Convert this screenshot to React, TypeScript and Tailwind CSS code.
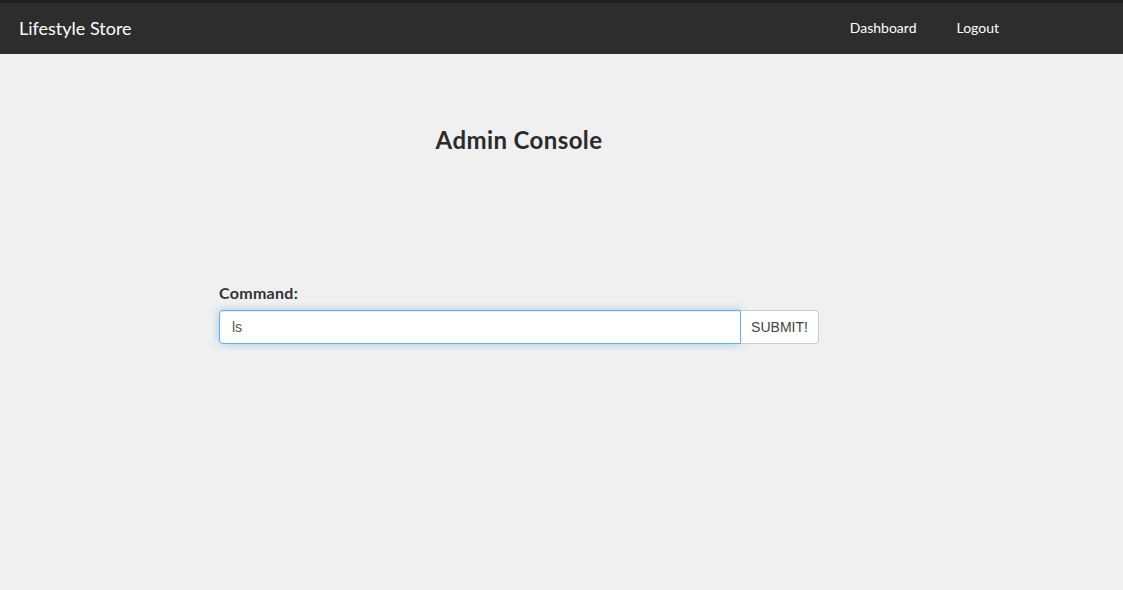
export default function App() {
  return (
    <div className="min-h-[590px] bg-[#f0f0f0] font-['Lato',sans-serif]">
      <nav className="h-[54px] border-t-[3px] border-[#1e1e1e] bg-[#2d2d2d] flex items-center">
        <div className="pl-[19px] text-[18px] text-white leading-none pb-[2px]">Lifestyle Store</div>
        <div className="ml-auto flex items-center gap-[40px] pr-[124px] text-[14px] text-white pb-[3px]">
          <a href="#">Dashboard</a>
          <a href="#">Logout</a>
        </div>
      </nav>

      <div className="w-[600px] ml-[219px]">
        <h2 className="mt-[74px] text-center text-[24px] font-bold tracking-[0.4px] text-[#2b2b2b] leading-none">Admin Console</h2>

        <form className="mt-[129px]" onSubmit={(e) => e.preventDefault()}>
          <label className="block text-[16px] font-bold tracking-[0.3px] text-[#333] mb-[5px]">Command:</label>
          <div className="flex h-[34px]">
            <input
              defaultValue="ls"
              className="flex-1 h-full rounded-l-[4px] border border-[#66afe9] bg-white px-[12px] text-[14px] text-[#555] font-['Liberation_Sans',sans-serif] outline-none shadow-[inset_0_1px_1px_rgba(0,0,0,0.075),0_0_8px_rgba(102,175,233,0.6)]"
            />
            <button
              type="submit"
              className="h-full w-[78px] rounded-r-[4px] border border-l-0 border-[#ccc] bg-white text-[14px] text-[#444] font-['Liberation_Sans',sans-serif]"
            >
              SUBMIT!
            </button>
          </div>
        </form>
      </div>
    </div>
  );
}
